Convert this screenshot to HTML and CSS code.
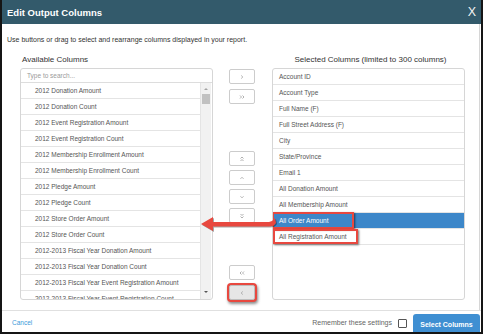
FILE: index.html
```html
<!DOCTYPE html>
<html lang="en">
  <head>
    <meta charset="UTF-8" />
    <meta name="viewport" content="width=device-width, initial-scale=1.0" />
    <title>Edit Output Columns</title>
    <link rel="stylesheet" href="styles.css">
  </head>
  <body>
    <div class="frame">
      <div class="header">
        <div class="title">Edit Output Columns</div>
        <div class="close">X</div>
      </div>

      <div class="content">
        <p class="intro">Use buttons or drag to select and rearrange columns displayed in your report.</p>

        <div class="columns">
          <div class="col">
            <div class="col-title left">Available Columns</div>
            <div class="box">
              <div class="search">Type to search...</div>
              <div class="box-body">
                <div class="list">
                  <div class="row">2012 Donation Amount</div>
                  <div class="row">2012 Donation Count</div>
                  <div class="row">2012 Event Registration Amount</div>
                  <div class="row">2012 Event Registration Count</div>
                  <div class="row">2012 Membership Enrollment Amount</div>
                  <div class="row">2012 Membership Enrollment Count</div>
                  <div class="row">2012 Pledge Amount</div>
                  <div class="row">2012 Pledge Count</div>
                  <div class="row">2012 Store Order Amount</div>
                  <div class="row">2012 Store Order Count</div>
                  <div class="row">2012-2013 Fiscal Year Donation Amount</div>
                  <div class="row">2012-2013 Fiscal Year Donation Count</div>
                  <div class="row">2012-2013 Fiscal Year Event Registration Amount</div>
                  <div class="row">2012-2013 Fiscal Year Event Registration Count</div>
                </div>
                <div class="scrollbar">
                  <span class="arrow-up"></span>
                  <span class="thumb"></span>
                  <span class="spacer"></span>
                  <span class="arrow-down"></span>
                </div>
              </div>
            </div>
          </div>

          <div class="moves">
            <button class="mv first"><svg width="8" height="8" viewBox="0 0 8 8"><polyline points="3.2,2.5 4.8,4 3.2,5.5" /></svg></button>
            <button class="mv"><svg width="8" height="8" viewBox="0 0 8 8"><polyline points="2,2.5 3.5,4 2,5.5" /><polyline points="4.5,2.5 6,4 4.5,5.5" /></svg></button>
            <button class="mv group"><svg width="8" height="8" viewBox="0 0 8 8"><polyline points="2.5,3.5 4,2 5.5,3.5" /><polyline points="2.5,6 4,4.5 5.5,6" /></svg></button>
            <button class="mv"><svg width="8" height="8" viewBox="0 0 8 8"><polyline points="2.5,4.8 4,3.3 5.5,4.8" /></svg></button>
            <button class="mv"><svg width="8" height="8" viewBox="0 0 8 8"><polyline points="2.5,3.3 4,4.8 5.5,3.3" /></svg></button>
            <button class="mv"><svg width="8" height="8" viewBox="0 0 8 8"><polyline points="2.5,2 4,3.5 5.5,2" /><polyline points="2.5,4.5 4,6 5.5,4.5" /></svg></button>
            <button class="mv group"><svg width="8" height="8" viewBox="0 0 8 8"><polyline points="3.5,2.5 2,4 3.5,5.5" /><polyline points="6,2.5 4.5,4 6,5.5" /></svg></button>
            <button class="mv active"><svg width="8" height="8" viewBox="0 0 8 8"><polyline points="4.8,2.5 3.2,4 4.8,5.5" /></svg></button>
          </div>

          <div class="col">
            <div class="col-title center">Selected Columns (limited to 300 columns)</div>
            <div class="box">
              <div class="list picked">
                <div class="row">Account ID</div>
                <div class="row">Account Type</div>
                <div class="row">Full Name (F)</div>
                <div class="row">Full Street Address (F)</div>
                <div class="row">City</div>
                <div class="row">State/Province</div>
                <div class="row">Email 1</div>
                <div class="row">All Donation Amount</div>
                <div class="row">All Membership Amount</div>
                <div class="row selected">All Order Amount<span class="callout order"></span></div>
                <div class="row">All Registration Amount<span class="callout reg"></span></div>
              </div>
            </div>
          </div>

          <svg class="pointer" width="82" height="24" viewBox="0 0 82 24">
            <path class="pointer-shadow" d="M4 13 L16 6 L16 11 L72 11 Q76 10 78 7 L79 12 Q77 15.5 72 15.5 L16 15.5 L16 20 Z" />
            <path class="pointer-fill" d="M3 12 L15 5 L15 10 L71 10 Q75 9 77 6 L78 11 Q76 14.5 71 14.5 L15 14.5 L15 19 Z" />
          </svg>
        </div>
      </div>

      <div class="footer">
        <a class="cancel">Cancel</a>
        <div class="footer-right">
          <span class="remember">Remember these settings</span>
          <span class="checkbox"></span>
          <button class="primary">Select Columns</button>
        </div>
      </div>
    </div>
  </body>
</html>
```

FILE: styles.css
```css
body {
  margin: 0;
  font-family: "Liberation Sans", Arial, sans-serif;
  background-color: #ffffff;
  color: #333333;
}

.frame {
  width: 483px;
  height: 334px;
  box-sizing: border-box;
  border: 2px solid #151515;
  border-top: none;
  display: flex;
  flex-direction: column;
  position: relative;
  overflow: hidden;
  background-color: #ffffff;
}

.header {
  height: 24px;
  flex: none;
  display: flex;
  justify-content: space-between;
  align-items: center;
  padding: 0 5px 0 5px;
  background-color: #335a6b;
  color: #ffffff;
}

.title {
  font-size: 9.5px;
  font-weight: bold;
}

.close {
  font-size: 12.5px;
  color: #f2f2f2;
}

.content {
  padding: 11px 0 10px 18px;
  border-right: 1px solid #d6d6d6;
  margin-right: 1px;
}

.intro {
  margin: 0 0 0 -13px;
  font-size: 7px;
  line-height: 10px;
  color: #333333;
}

.columns {
  display: flex;
  margin-top: 10px;
  position: relative;
}

.col {
  width: 193px;
  display: flex;
  flex-direction: column;
}

.col-title {
  font-size: 8px;
  line-height: 10px;
  color: #333333;
  margin-bottom: 3px;
}

.col-title.left {
  padding-left: 2px;
}

.col-title.center {
  text-align: center;
  padding-left: 4px;
}

.box {
  height: 232px;
  box-sizing: border-box;
  border: 1px solid #d6d6d6;
  border-radius: 3px;
  overflow: hidden;
  display: flex;
  flex-direction: column;
  background-color: #ffffff;
}

.search {
  height: 13px;
  flex: none;
  border-bottom: 1px solid #dddddd;
  font-size: 6.5px;
  line-height: 13px;
  padding-left: 6px;
  color: #9a9a9a;
}

.box-body {
  flex: 1;
  display: flex;
  overflow: hidden;
}

.list {
  flex: 1;
  overflow: hidden;
  border-right: 1px solid #e4e4e4;
}

.list.picked {
  border-right: none;
}

.row {
  height: 16px;
  box-sizing: border-box;
  border-bottom: 1px solid #e4e4e4;
  font-size: 6.5px;
  line-height: 15px;
  padding-left: 14px;
  color: #555555;
  white-space: nowrap;
  position: relative;
}

.picked .row {
  padding-left: 6px;
}

.picked .row.selected {
  background-color: #3d87c9;
  color: #ffffff;
}

.callout {
  position: absolute;
  left: -1px;
  top: -1px;
  height: 17px;
  box-sizing: border-box;
  border: 2px solid #e8483f;
  box-shadow: 1px 1px 2px rgba(0, 0, 0, 0.55);
}

.callout.order {
  width: 82px;
}

.callout.reg {
  left: 0;
  top: 0;
  height: 15px;
  width: 85px;
}

.scrollbar {
  width: 10px;
  margin-right: 1px;
  background-color: #f1f1f1;
  display: flex;
  flex-direction: column;
  align-items: center;
}

.arrow-up {
  margin-top: 5px;
  border-left: 2.5px solid transparent;
  border-right: 2.5px solid transparent;
  border-bottom: 2.5px solid #a3a3a3;
}

.thumb {
  width: 8px;
  height: 10px;
  margin-top: 4px;
  background-color: #c1c1c1;
}

.spacer {
  flex: 1;
}

.arrow-down {
  margin-bottom: 6px;
  border-left: 2.5px solid transparent;
  border-right: 2.5px solid transparent;
  border-top: 2.5px solid #555555;
}

.moves {
  width: 26px;
  margin: 0 17px 0 16px;
  padding-top: 14px;
  display: flex;
  flex-direction: column;
}

.mv {
  width: 26px;
  height: 15px;
  padding: 0;
  margin-top: 4px;
  box-sizing: border-box;
  border: 1px solid #cccccc;
  border-radius: 2px;
  background-color: #ffffff;
  display: flex;
  align-items: center;
  justify-content: center;
}

.mv:nth-child(2) {
  margin-top: 5px;
}

.mv.first {
  margin-top: 0;
}

.mv.group {
  margin-top: 47px;
}

.mv:nth-child(7) {
  margin-top: 42px;
}

.mv.active {
  margin-top: 5px;
  background-color: #e6e6e6;
  border-color: #bdbdbd;
  box-shadow: 0 0 0 2px #e8483f, 1px 2px 3px 2px rgba(0, 0, 0, 0.45);
}

.mv svg polyline {
  fill: none;
  stroke: #9c9c9c;
  stroke-width: 0.8;
}

.pointer {
  position: absolute;
  left: 178px;
  top: 157px;
}

.pointer-shadow {
  fill: rgba(0, 0, 0, 0.35);
}

.pointer-fill {
  fill: #e8483f;
}

.footer {
  flex: 1;
  border-top: 1px solid #e0e0e0;
  display: flex;
  justify-content: space-between;
  padding: 3px 1px 0 10px;
  overflow: hidden;
}

.cancel {
  font-size: 6.5px;
  line-height: 18px;
  color: #3a9ad9;
  cursor: pointer;
}

.footer-right {
  display: flex;
  align-items: flex-start;
}

.remember {
  font-size: 7px;
  line-height: 18px;
  color: #666666;
}

.checkbox {
  width: 7px;
  height: 7px;
  margin: 5px 6px 0 6px;
  border: 1px solid #555555;
  border-radius: 1px;
}

.primary {
  width: 67px;
  height: 21px;
  padding: 0;
  border: none;
  border-radius: 3px;
  background-color: #3f8fd2;
  color: #ffffff;
  font-family: "Liberation Sans", Arial, sans-serif;
  font-size: 7px;
  font-weight: bold;
  line-height: 18px;
  text-align: center;
  display: block;
}
```
